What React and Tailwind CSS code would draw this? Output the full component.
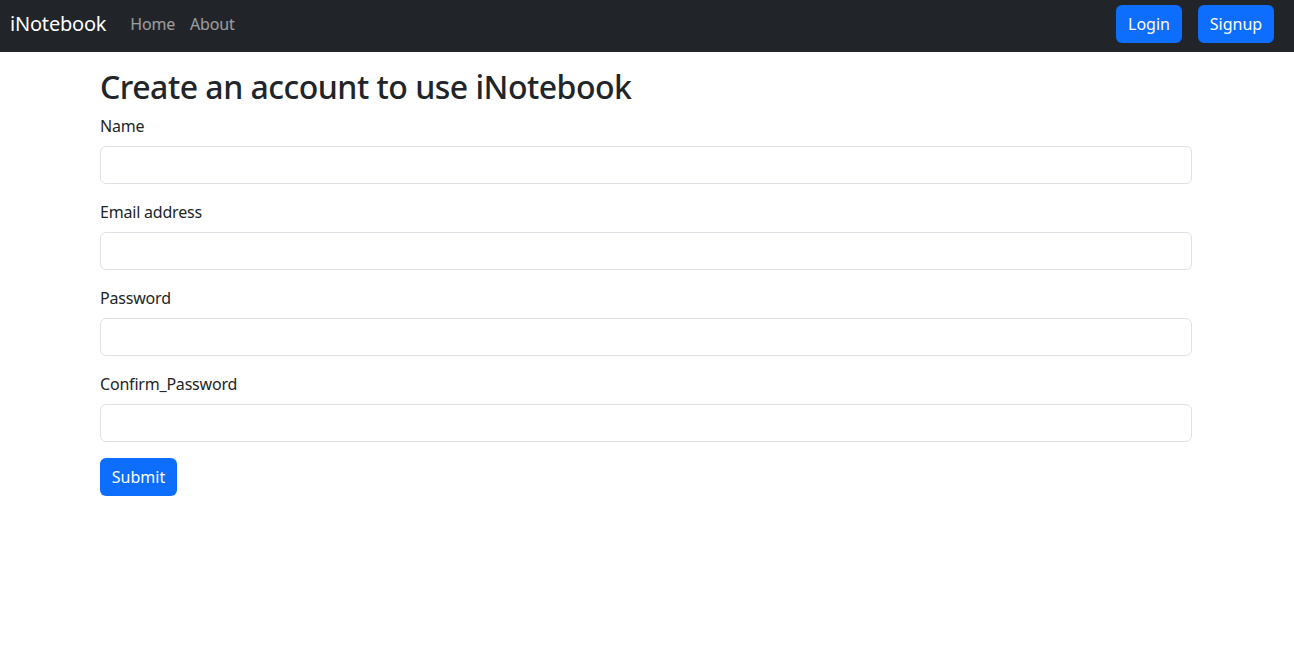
export default function App() {
	const fields = [
		{ id: "name", label: "Name", type: "text" },
		{ id: "email", label: "Email address", type: "email" },
		{ id: "password", label: "Password", type: "password" },
		{ id: "cpassword", label: "Confirm_Password", type: "password" },
	];

	return (
		<div className="min-h-[650px] bg-white text-[#212529] font-['Noto_Sans',sans-serif]">
			<nav className="h-[52px] pb-[4px] bg-[#212529] flex items-center pl-[10px] pr-[20px]">
				<a href="#" className="text-white text-[20px] leading-[30px] tracking-[-0.2px] mr-[24px]">
					iNotebook
				</a>
				<a href="#" className="text-white/55 text-[16px] tracking-[-0.2px] mr-[15px]">
					Home
				</a>
				<a href="#" className="text-white/55 text-[16px] tracking-[-0.2px]">
					About
				</a>
				<div className="ml-auto flex gap-[16px]">
					<button className="h-[38px] w-[66px] rounded-[6px] bg-[#0d6efd] text-white text-[16px]">
						Login
					</button>
					<button className="h-[38px] w-[76px] rounded-[6px] bg-[#0d6efd] text-white text-[16px]">
						Signup
					</button>
				</div>
			</nav>

			<div className="w-[1092px] ml-[100px] mt-[16px]">
				<h2 className="text-[32px] font-medium leading-[38px] tracking-[-0.5px] mb-[8px]">
					Create an account to use iNotebook
				</h2>
				<form onSubmit={(e) => e.preventDefault()}>
					{fields.map((f) => (
						<div key={f.id} className="mb-[16px]">
							<label
								htmlFor={f.id}
								className="block text-[16px] leading-[24px] tracking-[-0.2px] mb-[8px]"
							>
								{f.label}
							</label>
							<input
								id={f.id}
								type={f.type}
								className="block w-full h-[38px] border border-[#dee2e6] rounded-[6px] px-[12px] outline-none"
							/>
						</div>
					))}
					<button
						type="submit"
						className="h-[38px] w-[77px] rounded-[6px] bg-[#0d6efd] text-white text-[16px]"
					>
						Submit
					</button>
				</form>
			</div>
		</div>
	);
}
